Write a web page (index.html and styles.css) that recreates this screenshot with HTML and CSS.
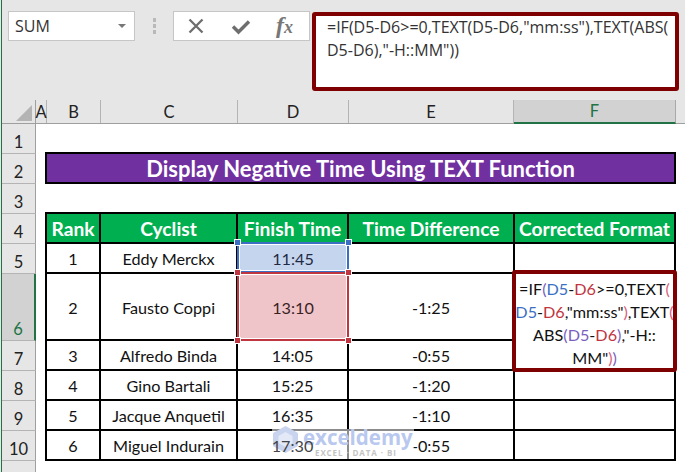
FILE: index.html
```html
<!DOCTYPE html>
<html lang="en">
<head>
<meta charset="utf-8">
<title>Display Negative Time Using TEXT Function</title>
<link rel="stylesheet" href="styles.css">
</head>
<body>
<div class="app">
  <div class="formula-bar">
    <div class="name-box"><span>SUM</span><i class="caret"></i></div>
    <div class="grip"><i></i><i></i><i></i></div>
    <div class="fx-box">
      <svg class="tool" width="20" height="20" viewBox="0 0 20 20"><path d="M3.5 3.5 16.5 16.5M16.5 3.5 3.5 16.5" fill="none" stroke="#6e6e6e" stroke-width="2.3"/></svg>
      <svg class="tool" width="20" height="20" viewBox="0 0 20 20"><path d="M2 10.5 7.5 16 18 5.5" fill="none" stroke="#6e6e6e" stroke-width="3.4"/></svg>
      <span class="fx">f<em>x</em></span>
    </div>
    <div class="formula-input">=IF(D5-D6&gt;=0,TEXT(D5-D6,"mm:ss"),TEXT(ABS(<br>D5-D6),"-H::MM"))</div>
  </div>

  <div class="col-heads">
    <div class="corner"><svg width="16" height="16" viewBox="0 0 16 16"><path d="M16 0V16H0Z" fill="#b4b4b4"/></svg></div>
    <div class="col-head">A</div>
    <div class="col-head">B</div>
    <div class="col-head">C</div>
    <div class="col-head">D</div>
    <div class="col-head">E</div>
    <div class="col-head col-active">F</div>
    <div class="col-rest"></div>
  </div>

  <div class="sheet">
    <div class="row-head">1</div><div class="blank-row"></div>
    <div class="row-head">2</div><div class="gap"></div><div class="title">Display Negative Time Using TEXT Function</div><div class="gap"></div>
    <div class="row-head">3</div><div class="blank-row"></div>

    <div class="row-head">4</div><div class="gap"></div>
    <div class="th first">Rank</div><div class="th">Cyclist</div><div class="th">Finish Time</div><div class="th">Time Difference</div><div class="th">Corrected Format</div>
    <div class="gap"></div>

    <div class="row-head">5</div><div class="gap"></div>
    <div class="td first">1</div><div class="td">Eddy Merckx</div>
    <div class="td"><div class="ref ref-blue">11:45<i class="h tl"></i><i class="h tr"></i></div></div>
    <div class="td"></div><div class="td"></div>
    <div class="gap"></div>

    <div class="row-head row-active">6</div><div class="gap"></div>
    <div class="td first">2</div><div class="td">Fausto Coppi</div>
    <div class="td"><div class="ref ref-red">13:10<i class="h tl"></i><i class="h tr"></i><i class="h bl"></i><i class="h br"></i></div></div>
    <div class="td">-1:25</div><div class="td"></div>
    <div class="gap"></div>

    <div class="row-head">7</div><div class="gap"></div>
    <div class="td first">3</div><div class="td">Alfredo Binda</div><div class="td">14:05</div><div class="td">-0:55</div><div class="td"></div>
    <div class="gap"></div>

    <div class="row-head">8</div><div class="gap"></div>
    <div class="td first">4</div><div class="td">Gino Bartali</div><div class="td">15:25</div><div class="td">-1:20</div><div class="td"></div>
    <div class="gap"></div>

    <div class="row-head">9</div><div class="gap"></div>
    <div class="td first">5</div><div class="td">Jacque Anquetil</div><div class="td">16:35</div><div class="td">-1:10</div><div class="td"></div>
    <div class="gap"></div>

    <div class="row-head">10</div><div class="gap"></div>
    <div class="td first">6</div><div class="td">Miguel Indurain</div><div class="td"><span class="over-mark">17:30</span></div><div class="td">-0:55</div><div class="td"></div>
    <div class="gap"></div>

    <div class="row-head row-end"></div><div class="blank-row"></div>

    <div class="cell-editor">
      <div>=IF<b class="pu">(</b><b class="bl-t">D5</b>-<b class="rd">D6</b>&gt;=0,TEXT<b class="pk">(</b></div>
      <div><b class="bl-t">D5</b>-<b class="rd">D6</b>,"mm:ss"<b class="pk">)</b>,TEXT<b class="pk">(</b></div>
      <div>ABS<b class="pu">(</b><b class="pu">D5</b>-<b class="rd">D6</b><b class="pu">)</b>,"-H::</div>
      <div>MM"<b class="pk">)</b><b class="pu">)</b></div>
    </div>

    <div class="watermark">
      <svg class="wm-hex" width="25" height="27" viewBox="0 0 25 27"><path d="M12.5 0 25 7V20L12.5 27 0 20V7Z" fill="#c9d4ee"/><path d="M12.5 6 19.5 10V17L12.5 21 5.5 17V10Z" fill="#e4e9f7"/></svg>
      <div class="wm-text"><span class="wm-name">exceldemy</span><span class="wm-sub">EXCEL · DATA · BI</span></div>
    </div>
  </div>
</div>
</body>
</html>
```

FILE: styles.css
```css
* { box-sizing: border-box; }
html, body { margin: 0; padding: 0; }
body { width: 685px; height: 472px; overflow: hidden; background: #e6e6e6; }

.app {
  width: 685px;
  height: 472px;
  margin-left: 1px;
  border-left: 1px solid #217346;
  display: flex;
  flex-direction: column;
  background: #e6e6e6;
  color: #111;
  font-family: Lato, "Liberation Sans", sans-serif;
  overflow: hidden;
}

/* formula bar */
.formula-bar {
  height: 100px;
  flex: none;
  padding: 11px 0 0 6px;
  display: flex;
  align-items: flex-start;
}
.name-box {
  width: 127px;
  height: 30px;
  background: #fff;
  border: 1px solid #c6c6c6;
  display: flex;
  align-items: center;
  justify-content: space-between;
  padding: 0 8px 0 6px;
  font: 16px "Open Sans", sans-serif;
  color: #333;
}
.caret {
  width: 0; height: 0;
  border-left: 4px solid transparent;
  border-right: 4px solid transparent;
  border-top: 4px solid #777;
}
.grip {
  width: 38px;
  height: 30px;
  display: flex;
  flex-direction: column;
  align-items: center;
  justify-content: center;
  gap: 2px;
}
.grip i { width: 3px; height: 4px; background: #b9b9b9; }
.fx-box {
  width: 137px;
  height: 30px;
  background: #fff;
  border: 1px solid #c6c6c6;
  display: flex;
  align-items: center;
  gap: 25px;
  padding: 0 0 0 12px;
}
.fx {
  font: italic 700 24px/26px "Liberation Serif", serif;
  color: #777;
}
.fx em { font-size: 18px; }
.formula-input {
  margin: 1px 0 0 2px;
  width: 367px;
  height: 79px;
  background: #fff;
  border: 4px solid #7f0000;
  border-radius: 3px;
  padding: 0 0 0 11px;
  font: 16px/23px "Open Sans", sans-serif;
  color: #333;
  white-space: nowrap;
}

/* column headings */
.col-heads {
  height: 24px;
  flex: none;
  display: grid;
  grid-template-columns: 34px 11px 54px 137px 111px 165px 162px 1fr;
  border-bottom: 1px solid #9f9f9f;
  font-size: 16.5px;
}
.corner {
  display: flex;
  justify-content: flex-end;
  align-items: flex-end;
  padding: 0 3px 2px 0;
  border-right: 1px solid #9f9f9f;
}
.col-head {
  display: flex;
  align-items: center;
  justify-content: center;
  border-right: 1px solid #b4b4b4;
  color: #222;
}
.col-active {
  background: #d2d2d2;
  color: #217346;
  border-bottom: 2px solid #217346;
  margin-bottom: -1px;
  border-right-color: #a8a8a8;
}

/* grid */
.sheet {
  position: relative;
  flex: 1;
  display: grid;
  grid-template-columns: 34px 9px 56px 137px 111px 166px 161px 1fr;
  grid-template-rows: repeat(5, 30px) 67px repeat(4, 30px) 1fr;
  background: #fff;
  font-size: 16.2px;
}
.row-head {
  background: #e6e6e6;
  border-right: 1px solid #9f9f9f;
  border-bottom: 1px solid #b4b4b4;
  display: flex;
  align-items: flex-end;
  justify-content: center;
  font-size: 16.5px;
  padding-bottom: 1px;
  color: #222;
  line-height: 20px;
}
.row-active {
  background: #d2d2d2;
  color: #217346;
  border-right: 2px solid #217346;
}
.row-end { border-bottom: 0; }
.blank-row { grid-column: 2 / -1; }
.title {
  grid-column: 3 / 8;
  margin-top: -2px;
  border: 2px solid #000;
  background: #7030a0;
  color: #fff;
  font-weight: 700;
  font-size: 22px;
  display: flex;
  align-items: center;
  justify-content: center;
}
.th, .td {
  border-right: 2px solid #000;
  border-bottom: 2px solid #000;
  display: flex;
  align-items: center;
  justify-content: center;
  white-space: nowrap;
}
.td { padding-top: 1px; }
.first { border-left: 2px solid #000; }
.th {
  margin-top: -2px;
  border-top: 2px solid #000;
  background: #00b050;
  color: #fff;
  font-weight: 700;
  font-size: 19.2px;
}

/* reference highlights */
.ref {
  position: absolute;
  display: flex;
  align-items: center;
  justify-content: center;
  border: 2px solid;
  box-shadow: inset 0 0 0 1px #fff;
}
.td:has(> .ref) { position: relative; }
.ref-blue { inset: -2px -2px -1px -1px; background: #c6d5ee; border-color: #3a6fc4; color: #1f2a44; padding-top: 1px; }
.ref-red { inset: -2px -2px -2px -1px; background: #efc5c9; border-color: #bf3540; color: #3a1f24; z-index: 1; padding-top: 1px; }
.h {
  position: absolute;
  width: 7px;
  height: 7px;
  border: 1px solid #fff;
}
.ref-blue .h { background: #3a6fc4; }
.ref-red .h { background: #bf3540; }
.tl { top: -5px; left: -5px; }
.tr { top: -5px; right: -5px; }
.bl { bottom: -5px; left: -5px; }
.br { bottom: -5px; right: -5px; }

/* in-cell editor */
.cell-editor {
  position: absolute;
  left: 510px;
  top: 146px;
  width: 165px;
  height: 102px;
  z-index: 2;
  background: #fff;
  border: 4px solid #7f0000;
  border-radius: 3px;
  overflow: hidden;
  padding-top: 3px;
  text-align: center;
  font-size: 16.2px;
  line-height: 23px;
  white-space: nowrap;
}
.cell-editor > div { margin: 0 -8px; }
.cell-editor b { font-weight: 400; }
.bl-t { color: #3a6fc4; }
.rd { color: #bf3540; }
.pu { color: #7a5fc0; }
.pk { color: #d9607a; }

/* watermark */
.watermark {
  position: absolute;
  left: 270px;
  top: 305px;
  width: 142px;
  height: 30px;
  z-index: 3;
  background: rgba(255, 255, 255, .55);
}
.over-mark { position: relative; z-index: 4; color: #444; }
.wm-hex { position: absolute; left: 1px; top: -3px; }
.wm-text { position: absolute; left: 31px; top: -2px; display: flex; flex-direction: column; }
.wm-name {
  font: 700 20.5px/21px "Open Sans", sans-serif;
  color: #b9c8ee;
}
.wm-sub {
  margin-left: 12px;
  font: 700 8px/9px "Open Sans", sans-serif;
  letter-spacing: .9px;
  color: #c4c4c4;
}
```
